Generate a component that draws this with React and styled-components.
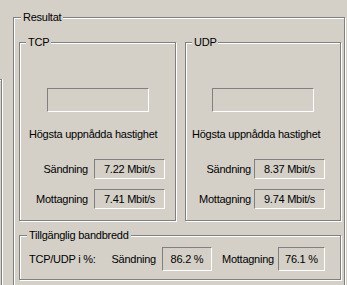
import styled, { createGlobalStyle } from 'styled-components';

const GlobalStyle = createGlobalStyle`
  html, body {
    margin: 0;
    padding: 0;
    background: #d4d0c8;
    overflow: hidden;
  }
  body {
    font-family: "Liberation Sans", Arial, sans-serif;
    font-size: 11px;
    letter-spacing: -0.25px;
    color: #000;
  }
`;

const Page = styled.div`
  display: flex;
  align-items: flex-start;
  width: 347px;
  height: 285px;
  overflow: hidden;
`;

const SideStub = styled.div`
  width: 1px;
  height: 210px;
  margin-top: 79px;
  border-top: 1px solid #808080;
  border-right: 1px solid #808080;
  box-shadow: inset 0 1px 0 #fff, 1px 0 0 #fff;
`;

const GroupBox = styled.div`
  box-sizing: border-box;
  flex-shrink: 0;
  width: ${(p) => p.width}px;
  height: ${(p) => p.height}px;
  margin-top: ${(p) => p.top || 0}px;
  margin-left: ${(p) => p.left || 0}px;
  border: 1px solid #808080;
  box-shadow: inset 1px 1px 0 #fff, 1px 1px 0 #fff;
  display: flex;
  flex-direction: column;
`;

const Legend = styled.div`
  align-self: flex-start;
  height: 13px;
  line-height: 13px;
  margin: -7px 0 0 ${(p) => p.indent}px;
  padding: 0 2px;
  background: #d4d0c8;
  white-space: nowrap;
`;

const Inner = styled.div`
  display: flex;
  flex-direction: column;
  padding: 0 3px 0 5px;
`;

const Columns = styled.div`
  display: flex;
  gap: 9px;
  margin-top: 18px;
`;

const Sunken = styled.div`
  box-sizing: border-box;
  border-top: 1px solid #808080;
  border-left: 1px solid #808080;
  border-bottom: 1px solid #fff;
  border-right: 1px solid #fff;
`;

const Graph = styled(Sunken)`
  align-self: center;
  width: 102px;
  height: 24px;
  margin-top: 39px;
`;

const Heading = styled.div`
  margin-top: 16px;
  padding-left: ${(p) => p.indent}px;
  line-height: 13px;
  white-space: nowrap;
`;

const Row = styled.div`
  display: flex;
  align-items: center;
  justify-content: flex-end;
  gap: ${(p) => p.gap}px;
  padding-right: ${(p) => p.right}px;
  margin-top: ${(p) => p.top}px;
`;

const Value = styled(Sunken)`
  display: flex;
  align-items: center;
  justify-content: center;
  width: ${(p) => p.width}px;
  height: ${(p) => p.height}px;
  white-space: nowrap;
`;

const Label = styled.span`
  white-space: nowrap;
  margin-left: ${(p) => p.space || 0}px;
`;

const Summary = styled.div`
  display: flex;
  align-items: center;
  margin-top: 5px;
  padding-left: 9px;
`;

const groups = [
  { name: 'TCP', width: 157, indent: 6, headIndent: 9, right: 10, gap: 6, send: '7.22 Mbit/s', recv: '7.41 Mbit/s' },
  { name: 'UDP', width: 156, indent: 6, headIndent: 6, right: 15, gap: 3, send: '8.37 Mbit/s', recv: '9.74 Mbit/s' },
];

const Protocol = ({ g }) => (
  <GroupBox width={g.width} height={179}>
    <Legend indent={g.indent}>{g.name}</Legend>
    <Graph />
    <Heading indent={g.headIndent}>Högsta uppnådda hastighet</Heading>
    <Row gap={g.gap} right={g.right} top={18}>
      <Label>Sändning</Label>
      <Value width={71} height={20}>{g.send}</Value>
    </Row>
    <Row gap={g.gap} right={g.right} top={10}>
      <Label>Mottagning</Label>
      <Value width={71} height={20}>{g.recv}</Value>
    </Row>
  </GroupBox>
);

export default function App() {
  return (
    <>
      <GlobalStyle />
      <Page>
        <SideStub />
        <GroupBox width={332} height={270} top={17} left={11}>
          <Legend indent={7}>Resultat</Legend>
          <Inner>
            <Columns>
              {groups.map((g) => (
                <Protocol key={g.name} g={g} />
              ))}
            </Columns>
            <GroupBox width={322} height={45} top={14}>
              <Legend indent={7}>Tillgänglig bandbredd</Legend>
              <Summary>
                <Label>TCP/UDP i %:</Label>
                <Label space={16}>Sändning</Label>
                <Label space={6}>
                  <Value width={50} height={24}>86.2 %</Value>
                </Label>
                <Label space={10}>Mottagning</Label>
                <Label space={4}>
                  <Value width={47} height={24}>76.1 %</Value>
                </Label>
              </Summary>
            </GroupBox>
          </Inner>
        </GroupBox>
      </Page>
    </>
  );
}
